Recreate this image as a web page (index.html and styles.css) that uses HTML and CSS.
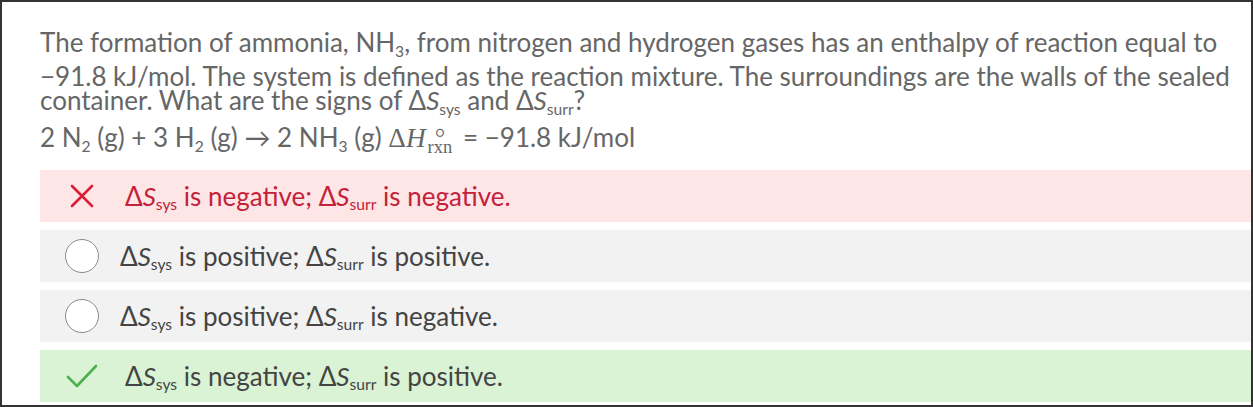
FILE: index.html
```html
<!DOCTYPE html>
<html>
<head>
<meta charset="utf-8">
<link rel="stylesheet" href="styles.css">
</head>
<body>
<div class="card">
  <div class="question">
    <p class="stem">The formation of ammonia, NH<sub>3</sub>, from nitrogen and hydrogen gases has an enthalpy of reaction equal to −91.8&nbsp;kJ/mol. The system is defined as the reaction mixture. The surroundings are the walls of the sealed container. What are the signs of Δ<i>S</i><sub>sys</sub> and Δ<i>S</i><sub>surr</sub>?</p>
    <p class="eq">2 N<sub>2</sub> (g) + 3 H<sub>2</sub> (g) → 2 NH<sub>3</sub> (g) <span class="math">Δ<i>H</i><span class="supsub"><span class="sup">∘</span><span class="sub">rxn</span></span></span> = −91.8 kJ/mol</p>
  </div>
  <ul class="options">
    <li class="opt wrong">
      <span class="icon"><svg width="26" height="26" viewBox="0 0 26 26"><path d="M3 3 L23 23 M23 3 L3 23" stroke="#d91e36" stroke-width="2.6" stroke-linecap="round" fill="none"/></svg></span>
      <span class="label">Δ<i>S</i><sub>sys</sub> is negative; Δ<i>S</i><sub>surr</sub> is negative.</span>
    </li>
    <li class="opt">
      <span class="icon"><span class="radio"></span></span>
      <span class="label">Δ<i>S</i><sub>sys</sub> is positive; Δ<i>S</i><sub>surr</sub> is positive.</span>
    </li>
    <li class="opt">
      <span class="icon"><span class="radio"></span></span>
      <span class="label">Δ<i>S</i><sub>sys</sub> is positive; Δ<i>S</i><sub>surr</sub> is negative.</span>
    </li>
    <li class="opt right">
      <span class="icon"><svg width="32" height="26" viewBox="0 0 32 26"><path d="M2 14 L11 23 L30 3" stroke="#4caf50" stroke-width="2.6" stroke-linecap="round" stroke-linejoin="round" fill="none"/></svg></span>
      <span class="label">Δ<i>S</i><sub>sys</sub> is negative; Δ<i>S</i><sub>surr</sub> is positive.</span>
    </li>
  </ul>
</div>
</body>
</html>
```
FILE: styles.css
```css
* { box-sizing: border-box; }
html, body { margin: 0; padding: 0; background: #fff; }
body {
  font-family: Lato, "Noto Sans", sans-serif;
}
.card {
  width: 1253px;
  height: 407px;
  border: 2px solid #333;
  padding: 28px 0 0 38px;
  display: flex;
  flex-direction: column;
}
.question {
  color: #666;
  font-size: 26px;
  line-height: 24px;
  padding-right: 20px;
}
.question p { margin: 0; }
.question .eq { margin-top: 4px; }
sub {
  font-size: 0.6em;
  vertical-align: -0.25em;
  line-height: 0;
}
.question sub { line-height: 1.6; vertical-align: -0.3em; }
i { font-style: italic; }
.math {
  font-family: "Liberation Serif", "DejaVu Serif", serif;
  font-size: 1.05em;
}
.supsub {
  display: inline-block;
  vertical-align: -0.3em;
  font-size: 0.68em;
  margin-left: 2px;
  margin-right: 4px;
  text-align: center;
  line-height: 0.9em;
}
.supsub .sup {
  display: block;
  font-family: "DejaVu Sans", sans-serif;
  font-size: 1.6em;
  line-height: 0.45em;
  font-weight: 300;
}
.supsub .sub {
  display: block;
  line-height: 0.9em;
}
.options {
  list-style: none;
  margin: 0;
  padding: 0;
  margin-top: auto;
  margin-bottom: 3px;
  display: flex;
  flex-direction: column;
  gap: 8px;
}
.opt {
  height: 52px;
  display: flex;
  align-items: center;
  background: #f2f2f2;
  color: #444;
  font-size: 26px;
}
.opt.wrong { background: #fee6e6; color: #c4213a; }
.opt.right { background: #d9f3d4; }
.icon {
  width: 34px;
  height: 34px;
  margin-left: 25px;
  margin-right: 21px;
  display: flex;
  align-items: center;
  justify-content: center;
}
.opt.wrong .icon, .opt.right .icon { margin-right: 26px; }
.radio {
  width: 34px;
  height: 34px;
  border: 1.5px solid #8a8a8a;
  border-radius: 50%;
  background: #fff;
}
.label { white-space: nowrap; }
```
